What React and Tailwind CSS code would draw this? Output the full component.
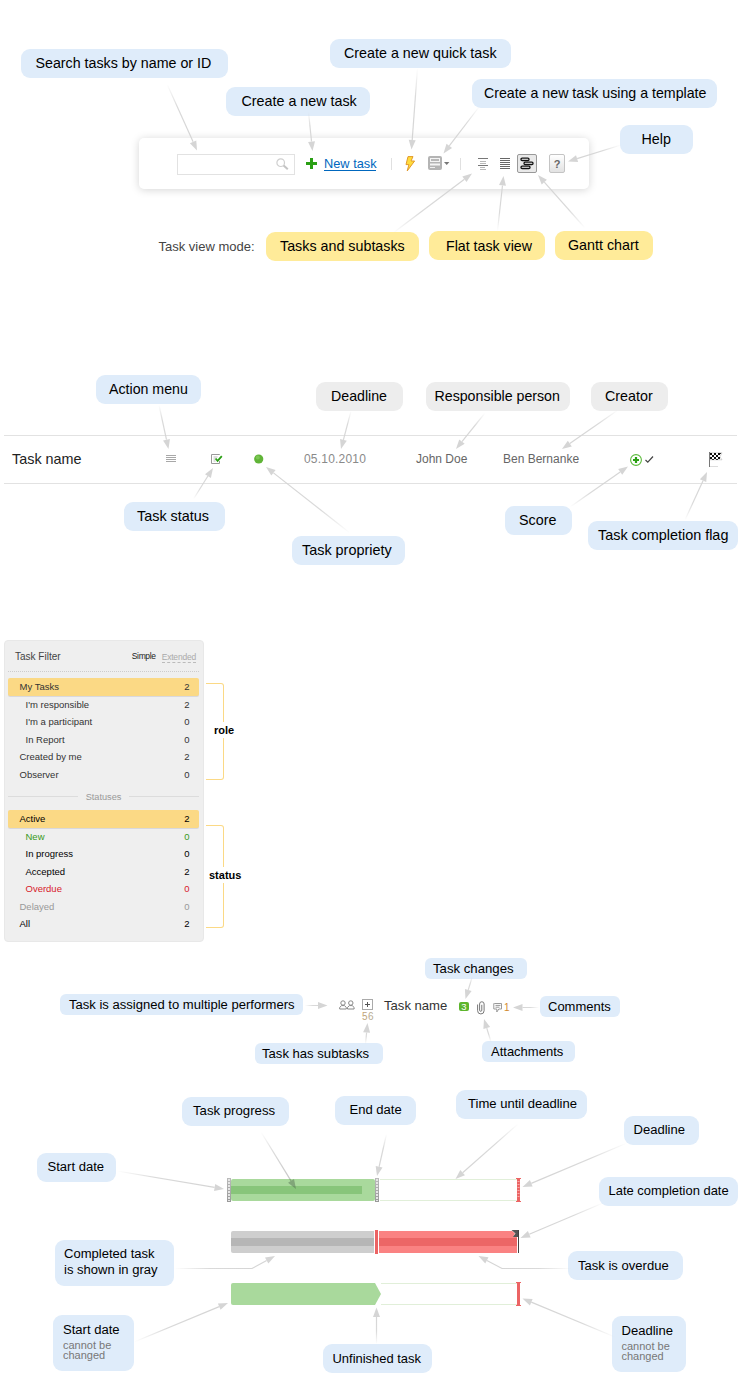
import React from "react";

const BLUE = "bg-[#dfecfa]";
const GRAY = "bg-[#ededed]";
const YELLOW = "bg-[#ffeb99]";
const L = "text-[14.3px]";
const M = "text-[13.05px]";
const S = "text-[13px]";

// x, y, width, height, text inset, text, size class, background
const callouts = [
  [21, 49, 207, 29, 14.5, "Search tasks by name or ID", "text-[14.25px]", BLUE],
  [226, 87, 144, 29, 15.5, "Create a new task", L, BLUE],
  [330, 39, 181, 29, 14, "Create a new quick task", L, BLUE],
  [472, 79, 245, 29, 12, "Create a new task using a template", "text-[14.2px]", BLUE],
  [620, 125, 73, 29, 21.5, "Help", L, BLUE],
  [266, 232, 153, 29, 14, "Tasks and subtasks", L, YELLOW],
  [429, 231, 116, 29, 17, "Flat task view", "text-[14.2px]", YELLOW, 1],
  [555, 231, 98, 29, 13, "Gantt chart", L, YELLOW],
  [96, 375, 105, 29, 13, "Action menu", "text-[14.2px]", BLUE],
  [124, 502, 101, 29, 13, "Task status", "text-[14.4px]", BLUE],
  [292, 536, 113, 29, 10, "Task propriety", "text-[14.4px]", BLUE],
  [316, 382, 87, 29, 15, "Deadline", "text-[14.2px]", GRAY],
  [426, 382, 144, 29, 8.5, "Responsible person", "text-[14.2px]", GRAY],
  [591, 382, 77, 29, 14, "Creator", L, GRAY],
  [505, 506, 67, 29, 14, "Score", L, BLUE],
  [588, 521, 150, 29, 10, "Task completion flag", "text-[14.4px]", BLUE],
  [60, 994, 243, 21, 9, "Task is assigned to multiple performers", "text-[13.05px]", BLUE],
  [255, 1043, 128, 21, 7, "Task has subtasks", "text-[13.1px]", BLUE],
  [425, 958, 102, 21, 8, "Task changes", "text-[13.2px]", BLUE],
  [540, 996, 80, 21, 8, "Comments", S, BLUE],
  [482, 1041, 93, 21, 9, "Attachments", S, BLUE],
  [37, 1153, 79, 29, 10.5, "Start date", M, BLUE],
  [182, 1097, 107, 29, 11, "Task progress", "text-[13.2px]", BLUE],
  [335, 1096, 81, 29, 14.5, "End date", M, BLUE],
  [456, 1090, 131, 29, 12, "Time until deadline", M, BLUE],
  [624, 1116, 75, 29, 9.5, "Deadline", M, BLUE],
  [599, 1177, 139, 29, 9.5, "Late completion date", "text-[12.95px]", BLUE],
  [568, 1251, 115, 29, 10, "Task is overdue", M, BLUE, 1],
  [323, 1344, 109, 29, 9.5, "Unfinished task", "text-[12.95px]", BLUE, 1],
];

const arrows = [
  [[167, 84], [197, 150.5]],
  [[308.5, 112], [312.5, 151]],
  [[417.5, 68], [411.5, 149.5]],
  [[479, 107], [443.5, 153.5]],
  [[621, 145], [568, 161.5]],
  [[393, 233], [472, 173.5]],
  [[497.5, 231], [503.5, 176]],
  [[585, 228], [538, 175]],
  [[159, 405], [168.5, 449]],
  [[193.5, 499], [213, 468]],
  [[350, 533], [266, 467]],
  [[351, 411], [341, 449]],
  [[485, 413], [456, 449]],
  [[618, 410], [562, 449]],
  [[570, 507], [628, 466.5]],
  [[685, 520], [707, 472]],
  [[305, 1005.5], [327.5, 1005.5]],
  [[365.5, 1044], [367.5, 1023]],
  [[472.5, 976], [465.5, 999]],
  [[491, 1042], [484, 1019]],
  [[539, 1007.5], [513, 1007.5]],
  [[117, 1171], [224, 1189]],
  [[261, 1132], [296, 1189], null, true],
  [[386.5, 1134], [377, 1176]],
  [[518, 1124], [455.5, 1179]],
  [[627, 1143], [522.5, 1187]],
  [[603, 1203], [520.5, 1238]],
  [[174, 1268.5], [275, 1256], [252, 1268.5]],
  [[572, 1268.5], [478.5, 1256], [502, 1268.5]],
  [[134, 1342], [228, 1303]],
  [[376.5, 1344], [376.5, 1307.5]],
  [[615, 1337], [522.5, 1298.5]],
];

function Arrow({ id, from, to, via, dark }) {
  const start = via || from;
  const dx = to[0] - start[0];
  const dy = to[1] - start[1];
  const len = Math.hypot(dx, dy);
  const ux = dx / len;
  const uy = dy / len;
  const bx = to[0] - ux * 9.5;
  const by = to[1] - uy * 9.5;
  const color = dark ? "#000" : "#d3d3d3";
  const headColor = dark ? "rgba(70,90,70,0.4)" : "#d5d5d5";
  const mid = via ? `L${via[0]} ${via[1]} ` : "";
  return (
    <g>
      <defs>
        <linearGradient id={id} gradientUnits="userSpaceOnUse" x1={from[0]} y1={from[1]} x2={to[0]} y2={to[1] + 0.01}>
          <stop offset="0" stopColor={color} stopOpacity="0" />
          <stop offset="0.35" stopColor={color} stopOpacity={dark ? 0.14 : 0.85} />
          <stop offset="1" stopColor={color} stopOpacity={dark ? 0.25 : 1} />
        </linearGradient>
      </defs>
      <path d={`M${from[0]} ${from[1]} ${mid}L${bx} ${by + 0.01}`} stroke={`url(#${id})`} strokeWidth="1.2" fill="none" />
      <path
        d={`M${to[0]} ${to[1]}L${bx - uy * 3.5} ${by + ux * 3.5}L${bx + uy * 3.5} ${by - ux * 3.5}Z`}
        fill={headColor}
      />
    </g>
  );
}

function Callout({ c }) {
  const [x, y, w, h, inset, text, size, bg, drop] = c;
  return (
    <div
      className={`absolute whitespace-nowrap text-black ${size} ${bg} ${h === 21 ? "rounded-[6px] leading-[21px]" : "rounded-[9px] leading-[28px]"}`}
      style={{ left: x, top: y, width: w, height: h, paddingLeft: inset, paddingTop: drop || 0 }}
    >
      {text}
    </div>
  );
}

function Toolbar() {
  return (
    <div className="ml-[139px] flex h-[51px] w-[450px] items-start rounded-[5px] bg-white pt-4 shadow-[0_1px_8px_rgba(0,0,0,0.17)]">
      <div className="ml-[38px] flex h-[21px] w-[118px] items-center justify-end border border-[#e2e2e2] bg-white pr-[5px]">
        <svg width="13" height="13" viewBox="0 0 13 13" fill="none">
          <circle cx="4.7" cy="4.7" r="3.8" stroke="#cfcfcf" strokeWidth="1.2" />
          <path d="M7.6 7.4L11.8 11.2" stroke="#c4c4c4" strokeWidth="2" />
        </svg>
      </div>
      <svg className="ml-[11px] mt-1" width="11" height="11" viewBox="0 0 11 11">
        <path d="M4 0h3v4h4v3H7v4H4V7H0V4h4z" fill="#2a9f14" />
      </svg>
      <span className="ml-[7px] mt-0.5 h-[15px] w-[52px] whitespace-nowrap border-b border-[#0067be] text-[12.8px] leading-[15px] text-[#0067be]">New task</span>
      <span className="ml-[15px] mt-1 h-3 w-px bg-[#e0e0e0]" />
      <svg className="ml-3 mt-[1.5px]" width="12" height="16" viewBox="0 0 12 16">
        <path d="M4 .6h5L7 5h3.6L3.2 15l1.7-6.4H2z" fill="#ffdc3c" stroke="#e39a2b" strokeWidth="1" />
      </svg>
      <svg className="ml-3 mt-0.5" width="22" height="14" viewBox="0 0 22 14">
        <rect width="14" height="14" rx="2" fill="#b4b4b4" />
        <path d="M2 2h10v4H2zM2 7.5h10v2H2z" fill="#f4f4f4" />
        <path d="M3 3h8v2H3z" fill="#b8b8b8" />
        <path d="M2 11h5v1H2z" fill="#eee" />
        <path d="M16 6h5.4L18.7 9z" fill="#777" />
      </svg>
      <span className="ml-[10px] mt-1 h-3 w-px bg-[#e0e0e0]" />
      <svg className="ml-[17px] mt-1" width="11" height="12" viewBox="0 0 11 12">
        <path d="M0 .5h10M0 7.5h10" stroke="#777" />
        <path d="M2 3.5h6M2 5.5h6M2 9.5h5M2 11.5h6" stroke="#b9b9b9" />
      </svg>
      <svg className="ml-[11px] mt-1" width="10" height="12" viewBox="0 0 10 12">
        <path d="M0 .5h10M0 2.5h10M0 4.5h10M0 6.5h10M0 8.5h10M0 10.5h10" stroke="#666" />
      </svg>
      <span className="ml-[7px] flex h-[19px] w-5 items-center justify-center rounded-[2px] border border-[#999] bg-[#e9e9e9]">
        <svg width="14" height="13" viewBox="0 0 14 13" fill="#fff" stroke="#111" strokeWidth="1.3">
          <rect x="1" y="1.2" width="8" height="2.3" rx="1.1" />
          <rect x="4" y="5.2" width="9" height="2.3" rx="1.1" />
          <rect x="1" y="9.2" width="9" height="2.3" rx="1.1" />
        </svg>
      </span>
      <span className="ml-3 h-[19px] w-4 rounded-[2px] border border-[#c4c4c4] bg-linear-to-b from-white to-[#e2e2e2] text-center text-[11px] font-bold leading-[18px] text-[#666]">?</span>
    </div>
  );
}

function TaskRow() {
  return (
    <div className="ml-1 flex h-[49px] w-[733px] items-center whitespace-nowrap border-y border-[#e2e2e2] pb-px">
      <span className="w-[162px] pl-2 text-[14.4px] leading-4 text-[#222]">Task name</span>
      <svg width="10" height="8" viewBox="0 0 10 8">
        <path d="M0 .5h10M0 2.5h10M0 4.5h10M0 6.5h10" stroke="#a8a8a8" />
      </svg>
      <svg className="ml-[34px]" width="13" height="12" viewBox="0 0 13 12" fill="none">
        <path d="M9.5 2V1.5h-8v9h8V8" stroke="#999" />
        <path d="M3.5 4h4M3.5 6h2M3.5 8h2" stroke="#bbb" />
        <path d="M5.6 5.5l2 2.3L11.8 3.2" stroke="#2a9f14" strokeWidth="1.8" />
      </svg>
      <svg className="ml-[31px]" width="10" height="10" viewBox="0 0 10 10">
        <circle cx="4.7" cy="5" r="4.6" fill="#60b437" />
        <circle cx="3.8" cy="3.6" r="2" fill="#7bc653" />
      </svg>
      <span className="ml-10 w-[112px] text-xs leading-4 tracking-[0.2px] text-[#8a8a8a]">05.10.2010</span>
      <span className="w-[87px] text-xs leading-4 text-[#666]">John Doe</span>
      <span className="w-[126.5px] text-xs leading-4 text-[#666]">Ben Bernanke</span>
      <svg className="relative top-px" width="24" height="14" viewBox="0 0 24 14" fill="none">
        <circle cx="6" cy="7" r="5.4" stroke="#5cba3c" strokeWidth="1.1" />
        <path d="M6 4v6M3 7h6" stroke="#2a9f14" strokeWidth="2.2" />
        <path d="M15.5 7l2.3 2.2L23 3.5" stroke="#444" strokeWidth="1.2" />
      </svg>
      <svg className="ml-[55px]" width="14" height="15" viewBox="0 0 14 15">
        <path d="M.5 0v15" stroke="#777" />
        <path d="M1 .8h12L11 4.8l2 3H1z" fill="#fff" stroke="#999" strokeWidth=".4" />
        <path d="M1 1h2v2H1zM5 1h2v2H5zM9 1h2v2H9zM3 3h2v2H3zM7 3h2v2H7zM1 5h2v2H1zM5 5h2v2H5zM9 5h2v2H9z" fill="#111" />
        <path d="M3 7h2v1H3zM7 7h2v1H7zM11 1h1v1h-1z" fill="#333" />
        <path d="M1 14.5h8" stroke="#ddd" />
      </svg>
    </div>
  );
}

function FilterRow({ label, count, active, nested, color }) {
  return (
    <div
      className={`flex h-[17.5px] items-center justify-between pr-[9.5px] text-[9.5px] leading-[17px] ${active ? "rounded-[2px] bg-[#fbd985] shadow-[0_1px_0_#d8d8dc]" : ""} ${nested ? "pl-[17.5px]" : "pl-[11.5px]"} ${color || "text-[#333]"}`}
    >
      <span>{label}</span>
      <span>{count}</span>
    </div>
  );
}

function Bracket({ height, children, width }) {
  return (
    <div className="flex w-[35px] items-center" style={{ height }}>
      <div className="h-full w-[18px] shrink-0 rounded-r-[3px] border border-l-0 border-[#fbd985]" />
      <span className={`mb-[3px] bg-white py-0.5 text-[11px] font-bold leading-3 text-black ${width}`}>{children}</span>
    </div>
  );
}

function FilterPanel() {
  return (
    <div className="ml-1 flex items-start gap-[2px]">
      <div className="h-[302px] w-[200px] rounded-[4px] border border-[#e8e8e8] bg-[#efefef] pl-[3px] pr-1">
        <div className="flex h-[31px] items-center border-b border-dotted border-[#ccc] pl-[7px] pr-[3px]">
          <span className="text-[10px] text-[#444]">Task Filter</span>
          <span className="ml-auto text-[8.5px] tracking-[-0.35px] text-[#222]">Simple</span>
          <span className="mt-0.5 ml-[6px] border-b border-dashed border-[#bbb] text-[8.5px] leading-[10px] tracking-[-0.2px] text-[#aaa]">Extended</span>
        </div>
        <div className="pt-1.5">
          <FilterRow active label="My Tasks" count="2" />
          <FilterRow nested label="I'm responsible" count="2" />
          <FilterRow nested label="I'm a participant" count="0" />
          <FilterRow nested label="In Report" count="0" />
          <FilterRow label="Created by me" count="2" />
          <FilterRow label="Observer" count="0" />
        </div>
        <div className="flex h-[27px] items-center gap-2 text-[9.2px] leading-3 text-[#999]">
          <span className="h-px flex-1 bg-[#dcdcdc]" />
          Statuses
          <span className="h-px flex-1 bg-[#dcdcdc]" />
        </div>
        <FilterRow active label="Active" count="2" color="text-black" />
        <FilterRow nested label="New" count="0" color="text-[#3a9a22]" />
        <FilterRow nested label="In progress" count="0" color="text-black" />
        <FilterRow nested label="Accepted" count="2" color="text-black" />
        <FilterRow nested label="Overdue" count="0" color="text-[#d8202a]" />
        <FilterRow label="Delayed" count="0" color="text-[#999]" />
        <FilterRow label="All" count="2" color="text-black" />
      </div>
      <div className="flex flex-col gap-[45px] pt-[43px]">
        <Bracket height={97} width="-ml-[10px]">role</Bracket>
        <Bracket height={103} width="-ml-[15px]">status</Bracket>
      </div>
    </div>
  );
}

function TaskTitle() {
  return (
    <div className="ml-[339px] mt-[57px] flex h-[23px] items-start">
      <svg className="mt-px" width="16" height="10" viewBox="0 0 16 10" fill="none" stroke="#888">
        <circle cx="4" cy="3" r="2.2" />
        <path d="M.7 9V7.4L2.6 5.6h2.8l1.9 1.8V9z" />
        <circle cx="11.8" cy="3" r="2.2" />
        <path d="M8.5 9V7.4l1.9-1.8h2.8l1.9 1.8V9z" />
      </svg>
      <div className="ml-[7px] flex w-3 flex-col">
        <svg width="11" height="11" viewBox="0 0 11 11" fill="none">
          <rect x=".5" y=".5" width="10" height="10" stroke="#aaa" />
          <path d="M5.5 3v5M3 5.5h5" stroke="#555" />
        </svg>
        <span className="mt-px text-[10px] leading-3 tracking-[0.3px]"><span className="text-[#c0a478]">5</span><span className="text-[#b8ab92]">6</span></span>
      </div>
      <span className="ml-[10px] w-[75px] whitespace-nowrap text-[13.1px] leading-[14px] text-[#333]">Task name</span>
      <span className="mt-[3px] h-[9px] w-[10px] rounded-[2px] bg-[#5db52c] text-center text-[9.5px] leading-[9px] text-white">3</span>
      <svg className="ml-2 mt-0.5" width="8" height="14" viewBox="0 0 8 14" fill="none" stroke="#777">
        <path d="M.6 3.5v6.2a3.2 3.2 0 0 0 6.5 0V3a2.2 2.2 0 0 0-4.5 0v6.2a1.1 1.1 0 0 0 2.2 0V3.8" />
      </svg>
      <svg className="ml-2 mt-1" width="10" height="10" viewBox="0 0 10 10" fill="none" stroke="#999">
        <path d="M1.5.5h7v5.5H5.8L3.8 9V6H.8V.5zM2.5 2.4h5M2.5 4.2h4" />
      </svg>
      <span className="ml-px mt-[3px] text-[10px] leading-3 text-[#d28a2e]">1</span>
    </div>
  );
}

function Handle() {
  return (
    <svg className="shrink-0" width="4" height="24" viewBox="0 0 4 24">
      <defs>
        <linearGradient id="handleFill" x1="0" y1="0" x2="0" y2="1">
          <stop offset="0" stopColor="#bbb" />
          <stop offset="1" stopColor="#999" />
        </linearGradient>
      </defs>
      <rect width="4" height="24" fill="url(#handleFill)" />
      <path d="M2 1v22" stroke="#e6e6e6" strokeWidth="2" strokeDasharray="2 1" />
    </svg>
  );
}

function DeadlineMark({ ridged }) {
  return (
    <svg className="-ml-px shrink-0" width="5" height="24" viewBox="0 0 5 24">
      <path d="M0 0h5v1H4v22h1v1H0v-1h1V1H0z" fill="#ec6464" />
      {ridged && <path d="M2.5 3v18" stroke="#f8a9a9" strokeWidth="2" strokeDasharray="1 2" />}
    </svg>
  );
}

function Gantt() {
  return (
    <div className="ml-[227px] mt-[156px] flex flex-col gap-7">
      <div className="flex h-6 items-center">
        <Handle />
        <div className="flex h-[22px] w-36 items-center rounded-[2px] bg-[#a9d99c]">
          <div className="h-2 w-[131px] bg-[#88c57a]" />
        </div>
        <Handle />
        <div className="ml-px h-[22px] w-[137px] border-y border-[#e1efd9]" />
        <DeadlineMark ridged />
      </div>
      <div className="flex h-6 items-center pl-1">
        <div className="flex h-[22px] w-[143px] items-center rounded-l-[2px] bg-[#cecece]">
          <div className="h-2 w-full bg-[#b6b6b6]" />
        </div>
        <div className="h-6 w-[5px] border-x border-white bg-[#ec6464]" />
        <div className="flex h-[22px] w-[138px] items-center bg-[#fa8282]">
          <div className="h-2 w-full bg-[#ec6666]" />
        </div>
        <svg className="-ml-[6px]" width="8" height="24" viewBox="0 0 8 24">
          <path d="M7 0v24" stroke="#fff" strokeWidth="2" />
          <path d="M0 0h8v7H2L4 3.5z" fill="#fff" />
          <path d="M.5 0H8v7H1.8L4.5 3.5z" fill="#555" />
          <path d="M7.5 0v23" stroke="#444" />
        </svg>
      </div>
      <div className="flex h-6 items-center pl-1">
        <svg width="150" height="22" viewBox="0 0 150 22">
          <path d="M2 0h142l6 11-6 11H2a2 2 0 0 1-2-2V2a2 2 0 0 1 2-2z" fill="#a9d99c" />
        </svg>
        <div className="h-[22px] w-[136px] border-y border-[#e1efd9]" />
        <DeadlineMark />
      </div>
    </div>
  );
}

export default function App() {
  return (
    <main className="relative flex h-[1390px] w-[745px] flex-col overflow-hidden bg-white font-['Liberation_Sans',Arial,sans-serif]">
      <section className="h-[435px] pt-[138px]">
        <Toolbar />
        <div className="ml-[158.5px] mt-[50px] text-[13px] leading-4 text-[#444]">Task view mode:</div>
      </section>
      <section className="h-[205px]">
        <TaskRow />
      </section>
      <FilterPanel />
      <TaskTitle />
      <Gantt />

      {callouts.map((c) => (
        <Callout key={`${c[0]}-${c[1]}`} c={c} />
      ))}
      <div className="absolute left-[55px] top-[1240px] h-[46px] w-[119px] rounded-[9px] bg-[#dfecfa] pl-[9px] pt-[6px] text-[13.05px] leading-4 text-black">
        Completed task
        <br />
        is shown in gray
      </div>
      <div className="absolute left-[53px] top-[1315px] h-14 w-[81px] rounded-[9px] bg-[#dfecfa] pl-[10px] pt-[7px] text-[13.05px] leading-4 text-black">
        Start date
        <div className="mt-0.5 text-[11px] leading-[10px] text-[#777]">cannot be<br />changed</div>
      </div>
      <div className="absolute left-[612px] top-[1316px] h-14 w-[74px] rounded-[9px] bg-[#dfecfa] pl-[9.5px] pt-[7px] text-[13.05px] leading-4 text-black">
        Deadline
        <div className="mt-0.5 text-[11px] leading-[10px] text-[#777]">cannot be<br />changed</div>
      </div>

      <svg className="pointer-events-none absolute left-0 top-0" width="745" height="1390" viewBox="0 0 745 1390">
        {arrows.map(([from, to, via, dark], i) => (
          <Arrow key={i} id={`fade${i}`} from={from} to={to} via={via} dark={dark} />
        ))}
      </svg>
    </main>
  );
}
